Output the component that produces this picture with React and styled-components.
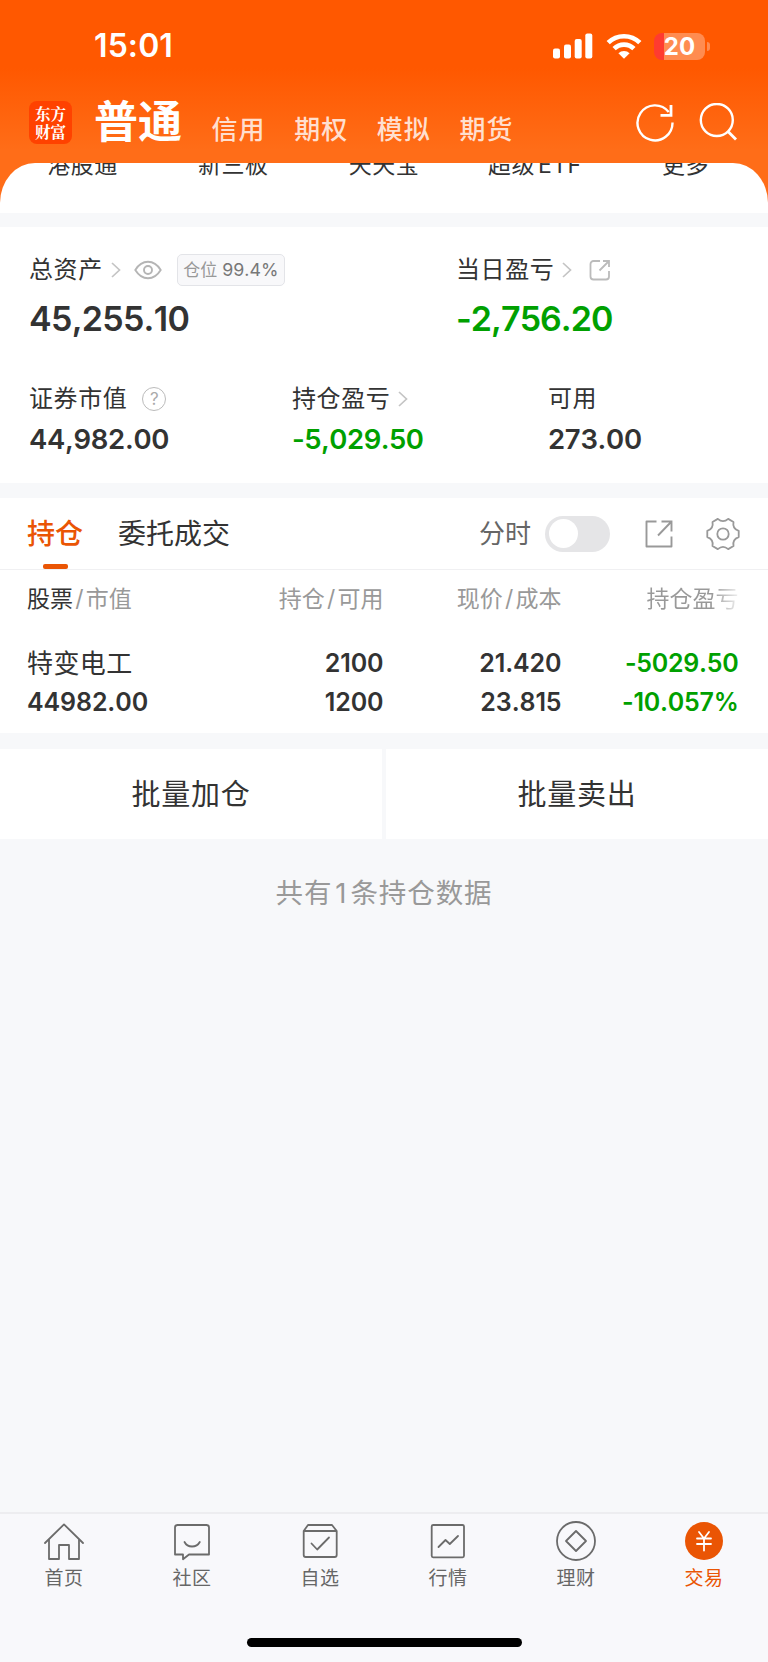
import React, {useState} from 'react'
import styled, {createGlobalStyle, css} from 'styled-components'

const GlobalStyle = createGlobalStyle`
  * {
    box-sizing: border-box;
  }
  body {
    margin: 0;
    background-color: #f7f8fa;
    color: #333;
    font-family: Inter, "Noto Sans CJK SC", sans-serif;
    font-kerning: none;
  }
  svg {
    display: block;
    fill: none;
    flex-shrink: 0;
  }
`

const Screen = styled.div`
  display: flex;
  flex-direction: column;
  width: 768px;
  height: 1662px;
  overflow: hidden;
`

const Header = styled.header`
  height: 163px;
  color: white;
  background: linear-gradient(#ff5800 0, #ff5800 68px, #ff6d18 150px, #ff6d18 163px);
`

const StatusBar = styled.div`
  display: flex;
  align-items: center;
  height: 92px;
  padding: 0 58px 0 94px;
`

const Clock = styled.div`
  flex: 1;
  font-size: 32px;
  font-weight: 600;
  line-height: 40px;
  letter-spacing: 0.1px;
`

const StatusIcons = styled.div`
  display: flex;
  align-items: center;
  gap: 12.5px;
`

const Battery = styled.div`
  display: flex;
  align-items: center;
  gap: 2px;
`

const BatteryBody = styled.div`
  width: 51px;
  height: 27px;
  border-radius: 8px;
  background: linear-gradient(90deg, #ff3b30 10px, #ff8c50 10px);
  font-size: 24px;
  font-weight: 700;
  line-height: 27px;
  text-align: center;
`

const BatteryTip = styled.div`
  width: 3px;
  height: 9px;
  border-radius: 0 4px 4px 0;
  background-color: #ff8c50;
`

const NavBar = styled.div`
  display: flex;
  height: 71px;
  padding: 9px 30px 0 29px;
`

const Logo = styled.div`
  width: 43px;
  height: 43px;
  padding-top: 4px;
  border-radius: 8px;
  background-color: #ff4200;
  font-family: "Noto Serif CJK SC", "Noto Sans CJK SC", serif;
  font-size: 15.5px;
  font-weight: 700;
  line-height: 17.5px;
  text-align: center;
`

const AccountTabs = styled.nav`
  display: flex;
  flex: 1;
  gap: 28.6px;
  margin-left: 22px;
`

const AccountTab = styled.div`
  font-size: 26px;
  font-weight: 500;
  line-height: 57px;
  letter-spacing: 1px;
  color: #ffdfcf;
  ${(props) =>
    props.$active &&
    css`
      margin-right: 1px;
      font-size: 44px;
      font-weight: 700;
      line-height: 43px;
      letter-spacing: 0;
      color: white;
  `}
`

const NavIcons = styled.div`
  display: flex;
  gap: 25px;
  padding-top: 2px;
`

const SheetTop = styled.div`
  background: linear-gradient(#ff6d18 40px, white 40px);
`

const Shortcuts = styled.div`
  display: grid;
  grid-template-columns: repeat(5, 1fr);
  height: 50px;
  padding: 0 7px;
  overflow: hidden;
  border-radius: 35px 35px 0 0 / 40px 40px 0 0;
  background-color: white;
`

const Shortcut = styled.div`
  margin-top: -14.5px;
  font-size: 23px;
  line-height: 32px;
  letter-spacing: 0.5px;
  word-spacing: -4px;
  text-align: center;
`

const Assets = styled.section`
  margin-top: 14px;
  height: 256px;
  padding: 26px 29px 0;
  background-color: white;
`

const AssetRow = styled.div`
  display: grid;
  grid-template-columns: ${(props) => props.$columns};
  height: ${(props) => props.$height}px;
`

const Label = styled.div`
  display: flex;
  align-items: center;
  height: 34px;
  font-size: 24px;
  font-weight: 400;
  line-height: 34px;
  letter-spacing: 0.6px;
  white-space: nowrap;
`

const Amount = styled.div`
  font-size: 27.5px;
  font-weight: 600;
  line-height: 46px;
  letter-spacing: ${(props) => props.$down ? "-0.5px" : "-0.3px"};
  color: ${(props) => props.$down ? "#00a000" : "#333"};
  ${(props) =>
    props.$large &&
    css`
      font-size: 34px;
      line-height: 64px;
      letter-spacing: ${props.$down ? "-0.95px" : "-0.7px"};
  `}
`

const Badge = styled.div`
  display: flex;
  align-items: center;
  justify-content: center;
  gap: 5px;
  width: 108px;
  height: 32px;
  margin-left: 15px;
  border: 1px solid #e3e4e8;
  border-radius: 5px;
  background-color: #f8f8fa;
  font-size: 17px;
  letter-spacing: 0;
  color: #999;
`

const BadgeValue = styled.span`
  font-size: 17.8px;
  color: #777;
`

const Positions = styled.section`
  margin-top: 15px;
  height: 235px;
  background-color: white;
`

const TabBar = styled.div`
  display: flex;
  align-items: center;
  height: 72px;
  padding: 0 28px 0 27px;
  border-bottom: 1px solid #f0f0f2;
`

const Tab = styled.div`
  display: flex;
  flex-direction: column;
  align-items: center;
  height: 71px;
  margin-right: 35px;
  font-size: 28px;
  line-height: 72px;
  color: #333;
  ${(props) =>
    props.$active &&
    css`
      font-weight: 500;
      color: #ea5504;
      &::after {
        content: "";
        width: 25px;
        height: 5px;
        margin-top: -6px;
        border-radius: 2px;
        background-color: #ea5504;
      }
  `}
`

const SwitchLabel = styled.div`
  margin-left: auto;
  font-size: 26px;
  line-height: 36px;
  color: #666;
`

const Switch = styled.button`
  width: 65px;
  height: 36px;
  margin: 0 35px 0 14px;
  padding: 3.5px;
  border: 0;
  border-radius: 18px;
  background-color: ${(props) => props.$on ? "#ea5504" : "#e5e5e7"};
`

const Knob = styled.div`
  width: 29px;
  height: 29px;
  margin-left: ${(props) => props.$on ? "29px" : "0"};
  border-radius: 50%;
  background-color: white;
`

const TableRow = styled.div`
  display: grid;
  grid-template-columns: 157px 199.5px 178px 177px;
  padding-left: 27px;
`

const HeadCell = styled.div`
  height: 58px;
  font-size: 23px;
  line-height: 58px;
  color: #999;
  text-align: right;
  white-space: nowrap;
  &:first-child {
    text-align: left;
  }
`

const Strong = styled.span`
  color: #333;
`

const Slash = styled.span`
  margin: 0 2.2px;
`

const FadedText = styled.span`
  background: linear-gradient(90deg, #999 70%, #fff 105%);
  background-clip: text;
  color: transparent;
`

const Cell = styled.div`
  padding-top: 16px;
  font-size: 25px;
  font-weight: 600;
  line-height: 39px;
  letter-spacing: ${(props) => props.$down ? "-0.25px" : "-0.1px"};
  text-align: right;
  color: ${(props) => props.$down ? "#00a000" : "#333"};
  &:first-child {
    text-align: left;
  }
`

const StockName = styled.div`
  font-size: 26px;
  font-weight: 400;
  letter-spacing: 0.4px;
`

const Actions = styled.div`
  display: grid;
  grid-template-columns: 1fr 1fr;
  gap: 4px;
  margin-top: 16px;
`

const Action = styled.div`
  height: 90px;
  background-color: white;
  font-size: 29px;
  line-height: 91px;
  letter-spacing: 0.8px;
  text-align: center;
`

const Summary = styled.div`
  flex: 1;
  padding-top: 33px;
  font-size: 27.5px;
  line-height: 42px;
  letter-spacing: 0.9px;
  text-align: center;
  color: #999;
`

const Count = styled.span`
  margin: 0 3px;
`

const BottomNav = styled.nav`
  display: grid;
  grid-template-columns: repeat(6, 1fr);
  height: 126px;
  border-top: 2px solid #ededf0;
  background-color: #f8f8fb;
`

const NavItem = styled.div`
  display: flex;
  flex-direction: column;
  align-items: center;
  padding-top: 6px;
  font-size: 19px;
  line-height: 34px;
  letter-spacing: 0.4px;
  color: ${(props) => props.$active ? "#ea5504" : "#666"};
`

const HomeIndicator = styled.div`
  height: 24px;
  background-color: #f8f8fb;
  &::after {
    content: "";
    display: block;
    width: 275px;
    height: 9px;
    margin: 0 auto;
    border-radius: 5px;
    background-color: black;
  }
`

const SignalIcon = () => (
  <svg width="40" height="26">
    <g fill="white">
      <rect x="0" y="15.5" width="7" height="10" rx="2" />
      <rect x="11" y="11.5" width="7" height="14" rx="2" />
      <rect x="21.7" y="6" width="7" height="19.5" rx="2" />
      <rect x="32.3" y="0.5" width="7" height="25" rx="2" />
    </g>
  </svg>
)

const WifiIcon = () => (
  <svg width="36" height="27" viewBox="0 0 36 27">
    <g stroke="white" strokeWidth="4.6">
      <path d="M2.2 9.7 A22.4 22.4 0 0 1 33.8 9.7" />
      <path d="M8.1 15.7 A14 14 0 0 1 27.9 15.7" />
    </g>
    <path d="M18 25.8 L12.4 20.2 A8 8 0 0 1 23.6 20.2 Z" fill="white" />
  </svg>
)

const RefreshIcon = () => (
  <svg width="38" height="40" stroke="white" strokeWidth="2.4">
    <path d="M36.5 19.5 A17.5 17.5 0 1 1 32.7 9" />
    <path d="M35 2 V12.3 H24.5" strokeWidth="2.8" />
  </svg>
)

const SearchIcon = () => (
  <svg width="39" height="40" stroke="white" strokeWidth="2.4">
    <circle cx="17.8" cy="17" r="16" />
    <path d="M29 28.5 L37 36.5" strokeWidth="2.8" />
  </svg>
)

const Chevron = styled(({className}) => (
  <svg className={className} width="10" height="16" stroke="#c4c4c4" strokeWidth="1.7">
    <path d="M1 1 L8.5 8 L1 15" />
  </svg>
))`
  margin-left: 8px;
`

const EyeIcon = styled(({className}) => (
  <svg className={className} width="28" height="20" stroke="#b5b5b5" strokeWidth="1.9">
    <path d="M1.3 10 C8 -1 20 -1 26.7 10 C20 21 8 21 1.3 10 Z" />
    <circle cx="14" cy="10" r="4" />
  </svg>
))`
  margin-left: 13px;
`

const ShareIcon = styled(({className}) => (
  <svg className={className} width="22" height="22" stroke="#bbb" strokeWidth="1.8">
    <path d="M11 2 H4.5 A3 3 0 0 0 1.5 5 V17.5 A3 3 0 0 0 4.5 20.5 H17 A3 3 0 0 0 20 17.5 V12" />
    <path d="M14 2 H20 V8 M20 2 L10.5 11.5" />
  </svg>
))`
  margin-left: 17px;
`

const HelpCircle = styled.div`
  width: 24px;
  height: 24px;
  margin-left: 15px;
  border: 1.8px solid #bbb;
  border-radius: 50%;
  font-size: 17px;
  line-height: 22px;
  letter-spacing: 0;
  text-align: center;
  color: #aaa;
`

const ExportIcon = () => (
  <svg width="28" height="28" stroke="#999" strokeWidth="1.9">
    <path d="M11.5 1.5 H1.5 V26.5 H26.5 V16.5" strokeLinejoin="round" />
    <path d="M16.5 1.5 H26.5 V11.5 M26.5 1.5 L13 15.5" />
  </svg>
)

const gearPoint = (deg, r) => {
  const a = deg * Math.PI / 180
  return `${(r * Math.cos(a)).toFixed(2)} ${(r * Math.sin(a)).toFixed(2)}`
}

const gearPath = [0, 60, 120, 180, 240, 300].map((deg, i) =>
  `${i ? "L" : "M"}${gearPoint(deg - 11, 16)} L${gearPoint(deg + 11, 16)} Q${gearPoint(deg + 30, 10.6)} ${gearPoint(deg + 49, 16)}`
).join(" ") + " Z"

const GearIcon = styled(({className}) => (
  <svg className={className} width="34" height="34" viewBox="-17 -17 34 34" stroke="#999" strokeWidth="1.8" strokeLinejoin="round">
    <path d={gearPath} />
    <circle r="5.7" />
  </svg>
))`
  margin-left: 33px;
`

const NavSvg = ({children}) => (
  <svg width="42" height="42" viewBox="-21 -21 42 42" stroke="#6b6b6b" strokeWidth="1.8" strokeLinejoin="round" strokeLinecap="round">
    {children}
  </svg>
)

const HomeIcon = () => (
  <NavSvg>
    <path d="M-19 2 L0 -16.6 L19 2" />
    <path d="M-15 -1 V18 H-5 V4 H5 V18 H15 V-1" />
  </NavSvg>
)

const CommunityIcon = () => (
  <NavSvg>
    <path d="M-14.5 -16 H14.5 Q17 -16 17 -13.5 V13.5 H-3 L-9 18.3 V13.5 H-17 V-13.5 Q-17 -16 -14.5 -16 Z" />
    <path d="M-7.5 1 C-4.5 7 4.5 7 7.8 1" />
  </NavSvg>
)

const WatchlistIcon = () => (
  <NavSvg>
    <path d="M-16.3 -10 L-12 -16 H12 L16.7 -10 V14 Q16.7 16 14.7 16 H-14.3 Q-16.3 16 -16.3 14 Z M-16.3 -10 H16.7" />
    <path d="M-8.5 2.5 L-2.8 8.5 L9 -3.5" />
  </NavSvg>
)

const MarketIcon = () => (
  <NavSvg>
    <rect x="-16.3" y="-16" width="32.3" height="32.3" rx="1.5" />
    <path d="M-9.5 6 L-2.5 -1 L1.8 3 L10 -5" />
  </NavSvg>
)

const WealthIcon = () => (
  <NavSvg>
    <circle r="19" />
    <path d="M0 -10 L10 0 L0 10 L-10 0 Z" />
  </NavSvg>
)

const TradeIcon = () => (
  <NavSvg>
    <circle r="19" fill="#ea5504" stroke="none" />
    <path d="M-5 -9 L0 -2.5 L5 -9 M0 -2.5 V9.5 M-7 -2.5 H7 M-7 3 H7" stroke="white" />
  </NavSvg>
)

const navItems = [
  {name: "首页", Icon: HomeIcon},
  {name: "社区", Icon: CommunityIcon},
  {name: "自选", Icon: WatchlistIcon},
  {name: "行情", Icon: MarketIcon},
  {name: "理财", Icon: WealthIcon},
  {name: "交易", Icon: TradeIcon},
]

const App = () => {
  const [chart, setChart] = useState(false)
  const [nav, setNav] = useState("交易")

  return (
    <Screen>
      <GlobalStyle />
      <Header>
        <StatusBar>
          <Clock>15:01</Clock>
          <StatusIcons>
            <SignalIcon />
            <WifiIcon />
            <Battery>
              <BatteryBody>20</BatteryBody>
              <BatteryTip />
            </Battery>
          </StatusIcons>
        </StatusBar>
        <NavBar>
          <Logo>东方<br />财富</Logo>
          <AccountTabs>
            <AccountTab $active>普通</AccountTab>
            <AccountTab>信用</AccountTab>
            <AccountTab>期权</AccountTab>
            <AccountTab>模拟</AccountTab>
            <AccountTab>期货</AccountTab>
          </AccountTabs>
          <NavIcons>
            <RefreshIcon />
            <SearchIcon />
          </NavIcons>
        </NavBar>
      </Header>

      <SheetTop>
        <Shortcuts>
          {["港股通", "新三板", "天天宝", "超级 ETF", "更多"].map((name) => (
            <Shortcut key={name}>{name}</Shortcut>
          ))}
        </Shortcuts>
      </SheetTop>

      <Assets>
        <AssetRow $columns="427px 1fr" $height={129}>
          <div>
            <Label>
              总资产<Chevron /><EyeIcon />
              <Badge>仓位<BadgeValue>99.4%</BadgeValue></Badge>
            </Label>
            <Amount $large>45,255.10</Amount>
          </div>
          <div>
            <Label>当日盈亏<Chevron /><ShareIcon /></Label>
            <Amount $large $down>-2,756.20</Amount>
          </div>
        </AssetRow>
        <AssetRow $columns="263px 256px 1fr" $height={90}>
          <div>
            <Label>证券市值<HelpCircle>?</HelpCircle></Label>
            <Amount>44,982.00</Amount>
          </div>
          <div>
            <Label>持仓盈亏<Chevron /></Label>
            <Amount $down>-5,029.50</Amount>
          </div>
          <div>
            <Label>可用</Label>
            <Amount>273.00</Amount>
          </div>
        </AssetRow>
      </Assets>

      <Positions>
        <TabBar>
          <Tab $active>持仓</Tab>
          <Tab>委托成交</Tab>
          <SwitchLabel>分时</SwitchLabel>
          <Switch $on={chart} onClick={() => setChart(!chart)}>
            <Knob $on={chart} />
          </Switch>
          <ExportIcon />
          <GearIcon />
        </TabBar>
        <TableRow>
          <HeadCell><Strong>股票</Strong><Slash>/</Slash>市值</HeadCell>
          <HeadCell>持仓<Slash>/</Slash>可用</HeadCell>
          <HeadCell>现价<Slash>/</Slash>成本</HeadCell>
          <HeadCell><FadedText>持仓盈亏</FadedText></HeadCell>
        </TableRow>
        <TableRow>
          <Cell><StockName>特变电工</StockName>44982.00</Cell>
          <Cell>2100<br />1200</Cell>
          <Cell>21.420<br />23.815</Cell>
          <Cell $down>-5029.50<br />-10.057%</Cell>
        </TableRow>
      </Positions>

      <Actions>
        <Action>批量加仓</Action>
        <Action>批量卖出</Action>
      </Actions>
      <Summary>共有<Count>1</Count>条持仓数据</Summary>

      <BottomNav>
        {navItems.map(({name, Icon}) => (
          <NavItem key={name} $active={nav === name} onClick={() => setNav(name)}>
            <Icon />
            {name}
          </NavItem>
        ))}
      </BottomNav>
      <HomeIndicator />
    </Screen>
  )
}

export default App
